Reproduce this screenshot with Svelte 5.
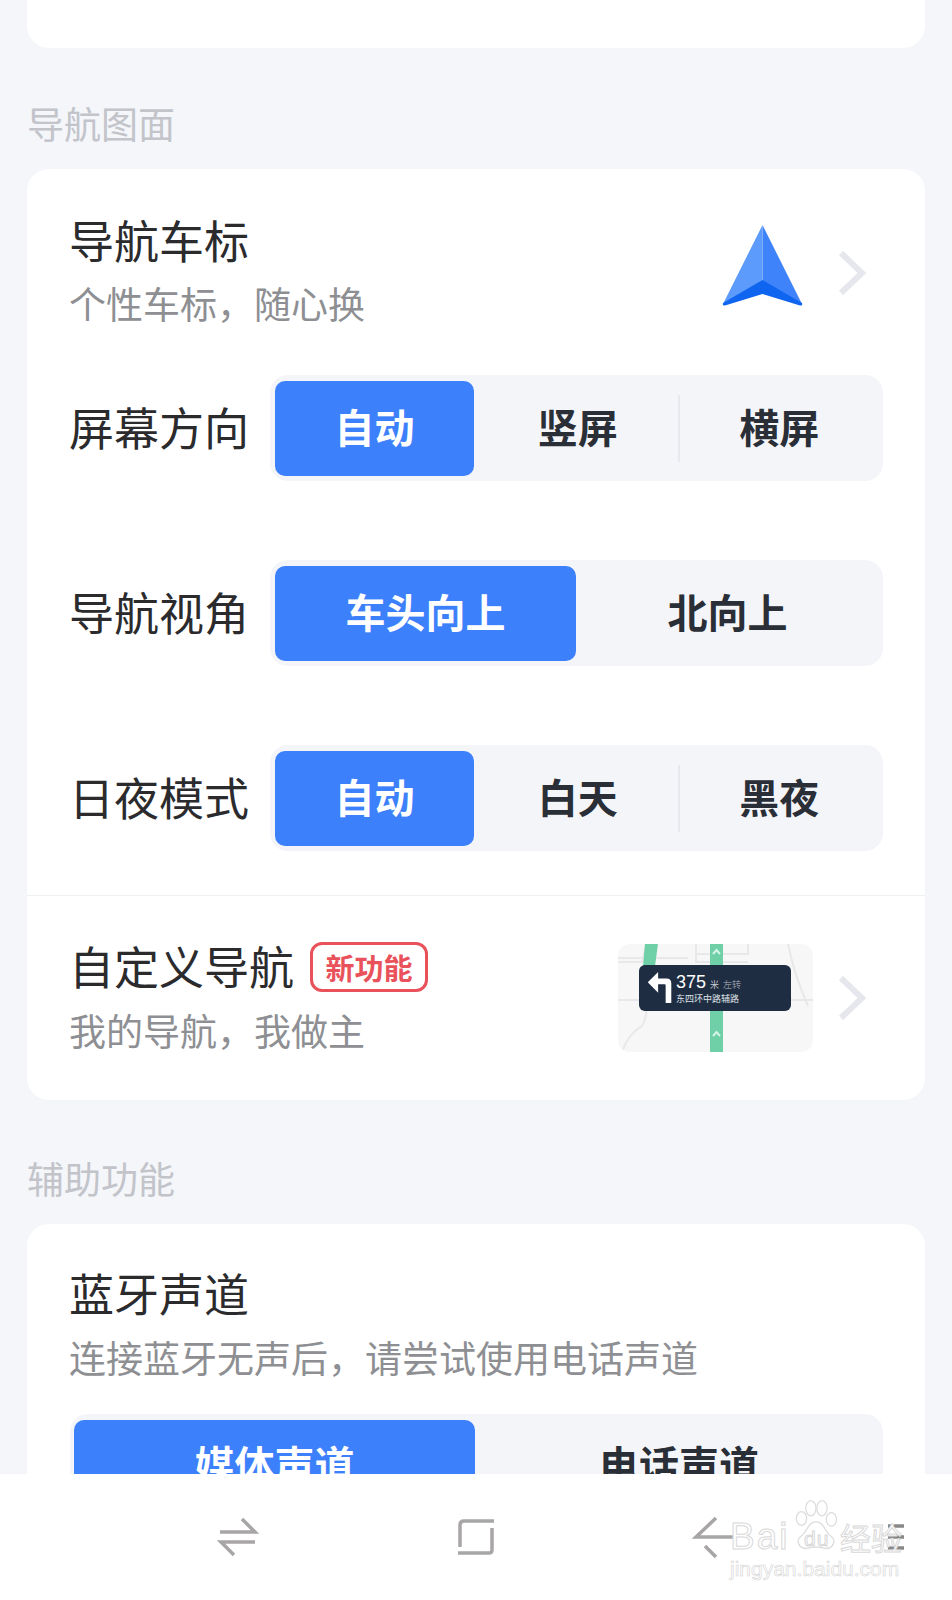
<script lang="ts">
	const orientation = ['自动', '竖屏', '横屏'];
	const perspective = ['车头向上', '北向上'];
	const daynight = ['自动', '白天', '黑夜'];
</script>

<div class="page">
	<div class="card top-card"></div>

	<h2 class="section-title first">导航图面</h2>
	<section class="card nav-card">
		<div class="row head-row">
			<div class="row-text">
				<div class="title">导航车标</div>
				<div class="sub">个性车标，随心换</div>
			</div>
			<svg class="car-icon" width="80" height="82" viewBox="0 0 80 82">
				<path d="M39.500 0 L79 79 L39.500 60Z" fill="#3f83fb" />
				<path d="M39.500 0 L0 79 L39.500 60Z" fill="#5c9bfb" />
				<path d="M39.500 55 L0 78 Q-1 81 2 80.500 L39.500 69 L77 80.500 Q80 81 79 78Z" fill="#0f65f0" />
			</svg>
			<svg class="chevron" width="28" height="44" viewBox="0 0 28 44" fill="none" stroke="#e6e7ec" stroke-width="6">
				<path d="M3 2 L24 22 L3 42" />
			</svg>
		</div>

		<div class="seg-row">
			<span class="seg-label">屏幕方向</span>
			<div class="seg three">
				{#each orientation as item, i}
					<span class="seg-item" class:active={i === 0} class:mid={i === 1} class:split={i === 2}>{item}</span>
				{/each}
			</div>
		</div>

		<div class="seg-row">
			<span class="seg-label">导航视角</span>
			<div class="seg two">
				{#each perspective as item, i}
					<span class="seg-item" class:active={i === 0}>{item}</span>
				{/each}
			</div>
		</div>

		<div class="seg-row last">
			<span class="seg-label">日夜模式</span>
			<div class="seg three">
				{#each daynight as item, i}
					<span class="seg-item" class:active={i === 0} class:mid={i === 1} class:split={i === 2}>{item}</span>
				{/each}
			</div>
		</div>

		<div class="row custom-row">
			<div class="row-text">
				<div class="title-line">
					<span class="title">自定义导航</span>
					<span class="badge">新功能</span>
				</div>
				<div class="sub">我的导航，我做主</div>
			</div>
			<div class="preview">
				<svg class="preview-map" width="195" height="108" viewBox="0 0 195 108" fill="none">
					<path d="M0 14 H70 M78 10 H130 V0 M130 18 H78 V0 M0 56 H195 M0 18 H24 L28 0 M4 108 Q10 90 24 82 Q30 72 28 56 M170 0 Q176 30 190 62" stroke="#e8e8ea" stroke-width="2" />
					<path d="M27 0 H40 L37 22 H25Z" fill="#6fd0a8" />
					<rect x="92" y="0" width="13" height="108" fill="#6fd0a8" />
					<path d="M95 10 L98.500 6 L102 10 M95 92 L98.500 88 L102 92" stroke="#d5f3e6" stroke-width="2" />
				</svg>
				<div class="sign">
					<svg width="26" height="32" viewBox="0 0 26 34" fill="none">
						<path d="M0 11 L11 0 V7 H20 Q25 7 25 12 V33 H19 V14 Q19 13 18 13 H11 V22Z" fill="#fff" />
					</svg>
					<div class="sign-text">
						<div class="sign-top"><b>375</b><i>米</i><i class="dim">左转</i></div>
						<div class="sign-road">东四环中路辅路</div>
					</div>
				</div>
			</div>
			<svg class="chevron" width="28" height="44" viewBox="0 0 28 44" fill="none" stroke="#e6e7ec" stroke-width="6">
				<path d="M3 2 L24 22 L3 42" />
			</svg>
		</div>
	</section>

	<h2 class="section-title">辅助功能</h2>
	<section class="card">
		<div class="bt-head">
			<div class="title">蓝牙声道</div>
			<div class="sub">连接蓝牙无声后，请尝试使用电话声道</div>
		</div>
		<div class="seg wide">
			<span class="seg-item active">媒体声道</span>
			<span class="seg-item">电话声道</span>
		</div>
	</section>

	<nav class="navbar">
		<svg class="nav-glyphs" width="952" height="126" viewBox="0 0 952 126" fill="none" stroke="#a8a5a6" stroke-width="3.500">
			<path d="M220 58 H255 L242 45 M255 68 H221 L234 81" />
			<path d="M460 73 V51 Q460 47 464 47 H494 M492 54 V76 Q492 79 489 79 H458" />
			<path d="M733 63 H696 L716 44 M705 72 L716 83" />
			<path d="M888 52 H904 M888 63 H904 M888 74 H904" stroke="#888" />
		</svg>
	</nav>

	<div class="watermark">
		<svg class="paw" width="48" height="53" viewBox="0 0 56 62" fill="#fff" stroke="#dcdcdc" stroke-width="1.500">
			<ellipse cx="11" cy="24" rx="6" ry="8" />
			<ellipse cx="22" cy="12" rx="6" ry="9" />
			<ellipse cx="35" cy="12" rx="6" ry="9" />
			<ellipse cx="46" cy="25" rx="6" ry="8" />
			<path d="M28 28 C18 28 18 40 10 45 C4 50 8 60 18 59 Q28 56 38 59 C48 60 52 50 46 45 C38 40 38 28 28 28Z" />
		</svg>
		<span class="wm-bai">Bai</span>
		<span class="wm-du">du</span>
		<span class="wm-cn">经验</span>
		<div class="wm-url">jingyan.baidu.com</div>
	</div>
</div>

<style>
	:global(body) {
		margin: 0;
		background: #f4f6fa;
	}

	.page {
		position: relative;
		width: 952px;
		height: 1600px;
		overflow: hidden;
		background: #f4f6fa;
		font-family: 'Noto Sans CJK SC', 'Noto Sans', sans-serif;
		color: #2b2b2e;
	}

	.card {
		margin: 0 27px;
		background: #fff;
		border-radius: 22px;
	}

	.top-card {
		height: 48px;
		border-radius: 0 0 22px 22px;
	}

	.section-title {
		margin: 0 0 0 27px;
		padding: 51px 0 26px;
		height: 47px;
		font-size: 37px;
		line-height: 54px;
		font-weight: 400;
		color: #c2c4ca;
	}

	.section-title.first {
		padding: 48px 0 30px;
		height: 43px;
	}

	.nav-card {
		padding-top: 1px;
	}

	.row {
		display: flex;
		align-items: center;
		padding: 0 59px 0 42px;
	}

	.head-row {
		height: 205px;
	}

	.row-text {
		flex: 1;
		margin-top: -4px;
	}

	.title {
		font-size: 45px;
		line-height: 64px;
	}

	.sub {
		font-size: 37px;
		line-height: 62px;
		color: #8e8f93;
	}

	.car-icon {
		margin: -14px 35px 0 0;
		overflow: visible;
	}

	.seg-row {
		display: flex;
		align-items: center;
		padding: 0 42px;
		height: 106px;
		margin-bottom: 79px;
	}

	.seg-row.last {
		margin-bottom: 44px;
	}

	.seg-label {
		width: 201px;
		margin-top: -3px;
		font-size: 45px;
		white-space: nowrap;
	}

	.seg {
		flex: 1;
		display: flex;
		height: 106px;
		box-sizing: border-box;
		padding: 6px 0 5px 5px;
		background: #f4f5f9;
		border-radius: 18px;
	}

	.seg-item {
		flex: 1;
		display: flex;
		align-items: center;
		justify-content: center;
		position: relative;
		box-sizing: border-box;
		padding-bottom: 6px;
		border-radius: 10px;
		font-size: 40px;
		font-weight: 700;
		color: #2a2e36;
	}

	.seg-item.active {
		background: #3d80fb;
		color: #fff;
	}

	.seg-item.mid {
		padding-left: 3px;
	}

	.seg.three .seg-item.active {
		flex: 0 0 199px;
	}

	.seg.two .seg-item.active {
		flex: 0 0 301px;
	}

	.seg.two .seg-item:not(.active) {
		padding-right: 4px;
	}

	.seg-item.split {
		padding-right: 3px;
	}

	.seg-item.split::before {
		content: '';
		position: absolute;
		left: -1px;
		top: 14px;
		bottom: 14px;
		width: 2px;
		background: #e8e9ee;
	}

	.custom-row {
		height: 204px;
		border-top: 1px solid #f0f1f4;
	}

	.custom-row .row-text {
		margin-top: 0;
	}

	.title-line {
		display: flex;
		align-items: center;
		gap: 17px;
		height: 64px;
	}

	.title-line .title {
		margin-top: -3px;
	}

	.badge {
		width: 112px;
		height: 44px;
		margin: 0 0 0 -1px;
		display: flex;
		align-items: center;
		justify-content: center;
		border: 3px solid #e9525a;
		border-radius: 12px;
		font-size: 29px;
		font-weight: 700;
		color: #e9525a;
	}

	.preview {
		position: relative;
		width: 195px;
		height: 108px;
		margin-right: 25px;
		border-radius: 12px;
		overflow: hidden;
		background: #f7f7f8;
	}

	.preview-map {
		display: block;
	}

	.sign {
		position: absolute;
		left: 21px;
		top: 21px;
		width: 152px;
		height: 46px;
		display: flex;
		align-items: center;
		gap: 3px;
		padding-left: 8px;
		box-sizing: border-box;
		background: #1f2d42;
		border-radius: 6px;
		color: #fff;
	}

	.sign-text {
		line-height: 1;
		margin-top: -1px;
	}

	.sign-top {
		display: flex;
		align-items: baseline;
		gap: 4px;
		height: 21px;
	}

	.sign-top b {
		font-family: 'Liberation Sans', sans-serif;
		font-size: 18px;
		font-weight: 400;
	}

	.sign-top i {
		font-style: normal;
		font-size: 9px;
		color: #c9ccd2;
	}

	.sign-top i.dim {
		color: #8d93a0;
	}

	.sign-road {
		font-size: 9px;
		color: #dfe2e7;
	}

	.bt-head {
		padding: 37px 42px 0;
	}

	.bt-head .sub {
		margin-top: 1px;
		white-space: nowrap;
	}

	.seg.wide {
		margin: 26px 42px 0 43px;
		padding-left: 4px;
		height: 120px;
	}

	.seg.wide .seg-item {
		align-items: flex-start;
		padding: 14px 0 0;
	}

	.seg.wide .seg-item.active {
		flex: 0 0 401px;
	}

	.navbar {
		position: absolute;
		left: 0;
		right: 0;
		bottom: 0;
		height: 126px;
		background: #fff;
	}

	.nav-glyphs {
		display: block;
	}

	.watermark {
		position: absolute;
		left: 730px;
		top: 1497px;
		width: 175px;
		height: 84px;
		color: #fff;
		font-family: 'Liberation Sans', sans-serif;
	}

	.paw {
		position: absolute;
		left: 62px;
		top: 1px;
	}

	.wm-bai,
	.wm-du,
	.wm-cn {
		position: absolute;
		-webkit-text-stroke: 1px #d8d8d8;
	}

	.wm-bai {
		left: 0;
		top: 18px;
		font-size: 37px;
		line-height: 44px;
		letter-spacing: 2px;
	}

	.wm-du {
		left: 74px;
		top: 29px;
		font-size: 21px;
		line-height: 26px;
		letter-spacing: 1px;
	}

	.wm-cn {
		left: 110px;
		top: 18px;
		font-family: 'Noto Sans CJK SC', sans-serif;
		font-size: 31px;
		line-height: 44px;
		white-space: nowrap;
	}

	.wm-url {
		position: absolute;
		left: 0;
		top: 60px;
		font-size: 21px;
		color: #fff;
		-webkit-text-stroke: 0.6px #d4d4d4;
	}
</style>
